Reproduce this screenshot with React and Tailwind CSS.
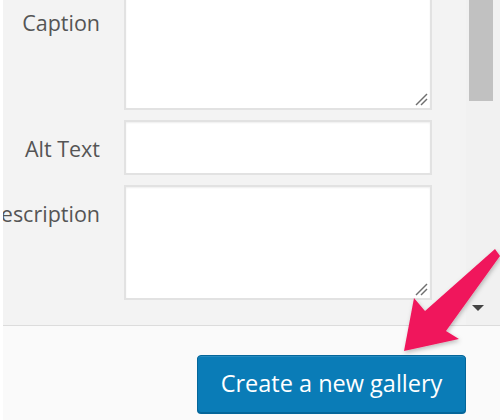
import React from 'react';

function ResizeGrip() {
  return (
    <svg className="absolute right-[2px] bottom-[2px]" width="14" height="14" viewBox="0 0 14 14">
      <line x1="2" y1="13" x2="13" y2="2" stroke="#6f6f6f" strokeWidth="1.4" />
      <line x1="7" y1="13" x2="13" y2="7" stroke="#6f6f6f" strokeWidth="1.4" />
    </svg>
  );
}

function Field({ label, height, area }) {
  return (
    <div className="flex items-start gap-6">
      <div className="w-[97px] shrink-0 overflow-hidden flex justify-end pt-[15px] text-[21.5px] leading-[28px] text-[#555]">
        <span className="whitespace-nowrap">{label}</span>
      </div>
      <div
        className="relative w-[308px] bg-white border-2 border-[#e2e2e2] shadow-[inset_0_1px_2px_rgba(0,0,0,0.07)]"
        style={{ height }}
      >
        {area && <ResizeGrip />}
      </div>
    </div>
  );
}

export default function App() {
  return (
    <div className="w-[500px] h-[420px] overflow-hidden bg-white font-['Open_Sans','Liberation_Sans',sans-serif] relative">
      <div className="pl-[3px]">
        <div className="h-[326px] flex bg-[#f3f3f3] border-b border-[#dcdcdc]">
          <div className="flex-1 overflow-hidden">
            <div className="-mt-[6px] flex flex-col gap-[10px]">
              <Field label="Caption" height={116} area />
              <Field label="Alt Text" height={55} />
              <Field label="Description" height={115} area />
            </div>
          </div>
          <div className="w-[34px] shrink-0 bg-[#f1f1f1] flex flex-col items-center pr-[4px]">
            <div className="w-[24px] h-[101px] bg-[#c1c1c1]" />
            <div className="flex-1" />
            <div className="mb-[14px] mr-[6px] w-0 h-0 border-l-[6px] border-r-[6px] border-t-[6px] border-l-transparent border-r-transparent border-t-[#444]" />
          </div>
        </div>
        <div className="h-[94px] bg-[#fafafa] flex justify-end items-start pt-[29px] pr-[34px]">
          <button className="w-[269px] h-[58px] rounded-[4px] bg-[#0a7cb7] border border-[#04669a] text-white text-[23.5px] shadow-[0_1px_0_#04669a,inset_0_1px_0_rgba(255,255,255,0.12)]">
            Create a new gallery
          </button>
        </div>
      </div>
      <svg className="absolute left-0 top-0 pointer-events-none" width="500" height="420" viewBox="0 0 500 420">
        <defs>
          <filter id="sh" x="-20%" y="-20%" width="140%" height="140%">
            <feDropShadow dx="1" dy="2" stdDeviation="2" floodColor="#000" floodOpacity="0.25" />
          </filter>
        </defs>
        <polygon
          points="404,351 414,298 425,311 495,249 500,256 446,331 459,339"
          fill="#f0185c"
          filter="url(#sh)"
        />
      </svg>
    </div>
  );
}
